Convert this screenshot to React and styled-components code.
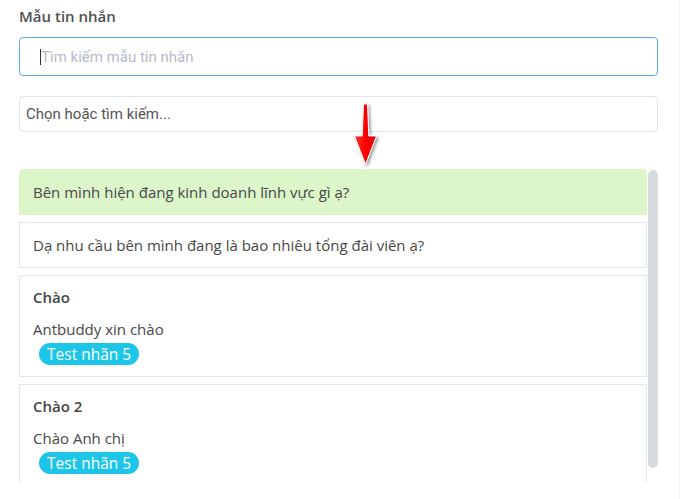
import React from "react";
import styled, { createGlobalStyle } from "styled-components";

const GlobalStyle = createGlobalStyle`
  html, body { margin: 0; padding: 0; background: #ffffff; }
  body { font-family: "Open Sans", "Noto Sans", sans-serif; }
  * { box-sizing: border-box; }
`;

const Panel = styled.div`
  position: relative;
  width: 680px;
  height: 499px;
  padding: 6px 21px 0 19px;
  border-right: 1px solid #f1f3f5;
  display: flex;
  flex-direction: column;
  overflow: hidden;
`;

const Title = styled.div`
  font-family: "Open Sans", sans-serif;
  font-size: 15px;
  font-weight: 600;
  line-height: 20px;
  color: #4f4f4f;
  margin-bottom: 11px;
`;

const SearchBox = styled.div`
  height: 39px;
  border: 1px solid #5fa9ec;
  border-radius: 4px;
  display: flex;
  align-items: center;
  padding-left: 20px;
  font-family: Roboto, sans-serif;
  font-size: 15px;
  color: #b6bac9;
`;

const Caret = styled.span`
  display: inline-block;
  width: 1px;
  height: 16px;
  background: #333;
`;

const SelectBox = styled.div`
  margin-top: 20px;
  height: 36px;
  border: 1px solid #dfe5e9;
  border-radius: 4px;
  display: flex;
  align-items: center;
  padding-left: 6px;
  font-family: Roboto, sans-serif;
  font-size: 15px;
  color: #555555;
`;

const ListArea = styled.div`
  margin-top: 37px;
  height: 313px;
  display: flex;
  gap: 1px;
  overflow: hidden;
`;

const Items = styled.div`
  width: 628px;
  display: flex;
  flex-direction: column;
  gap: 7px;
`;

const Item = styled.div`
  flex-shrink: 0;
  border: 1px solid ${(p) => (p.$active ? "#dcf6c9" : "#e2e7ea")};
  background: ${(p) => (p.$active ? "#dcf6c9" : "#ffffff")};
  border-radius: ${(p) => (p.$active ? "4px 4px 0 0" : "0")};
  padding: ${(p) => (p.$rich ? "11px 13px 11px 13px" : "0 13px")};
  min-height: 46px;
  display: flex;
  flex-direction: column;
  justify-content: ${(p) => (p.$rich ? "flex-start" : "center")};
  font-family: "Open Sans", sans-serif;
  font-size: 15px;
  color: #474747;
  line-height: 21px;
`;

const ItemTitle = styled.div`
  font-weight: 600;
  color: #444444;
`;

const ItemText = styled.div`
  margin-top: 11px;
`;

const Tag = styled.span`
  align-self: flex-start;
  margin: 3px 0 0 6px;
  height: 22px;
  padding: 0 8px;
  border-radius: 11px;
  background: #1dc6e9;
  color: #ffffff;
  font-size: 15.5px;
  line-height: 22px;
  white-space: nowrap;
`;

const Track = styled.div`
  width: 10px;
  padding-top: 1px;
`;

const Thumb = styled.div`
  height: 298px;
  border-radius: 5px;
  background: #d6dce0;
`;

const Arrow = styled.svg`
  position: absolute;
  left: 350px;
  top: 100px;
  overflow: visible;
`;

const RedArrow = () => (
  <Arrow width="32" height="70" viewBox="0 0 32 70">
    <defs>
      <linearGradient id="rg" x1="0" y1="0" x2="1" y2="0">
        <stop offset="0" stopColor="#ff3030" />
        <stop offset="0.5" stopColor="#ff0000" />
        <stop offset="1" stopColor="#d00000" />
      </linearGradient>
      <filter id="sh" x="-50%" y="-20%" width="200%" height="150%">
        <feDropShadow dx="1.5" dy="1.5" stdDeviation="1.5" floodColor="#000" floodOpacity="0.45" />
      </filter>
    </defs>
    <path
      d="M13.5 4 L17.5 4 L18.8 36 L26.5 36 L15.5 64.5 L4.5 36 L12.2 36 Z"
      fill="url(#rg)"
      stroke="#ffffff"
      strokeWidth="1"
      strokeLinejoin="round"
      filter="url(#sh)"
    />
  </Arrow>
);

const templates = [
  { text: "Bên mình hiện đang kinh doanh lĩnh vực gì ạ?", active: true },
  { text: "Dạ nhu cầu bên mình đang là bao nhiêu tổng đài viên ạ?" },
  { title: "Chào", text: "Antbuddy xin chào", tag: "Test nhãn 5" },
  { title: "Chào 2", text: "Chào Anh chị", tag: "Test nhãn 5" },
];

export default function App() {
  return (
    <>
      <GlobalStyle />
      <Panel>
        <Title>Mẫu tin nhắn</Title>
        <SearchBox>
          <Caret />
          Tìm kiếm mẫu tin nhắn
        </SearchBox>
        <SelectBox>Chọn hoặc tìm kiếm...</SelectBox>
        <ListArea>
          <Items>
            {templates.map((t, i) =>
              t.title ? (
                <Item key={i} $rich>
                  <ItemTitle>{t.title}</ItemTitle>
                  <ItemText>{t.text}</ItemText>
                  <Tag>{t.tag}</Tag>
                </Item>
              ) : (
                <Item key={i} $active={t.active}>
                  {t.text}
                </Item>
              )
            )}
          </Items>
          <Track>
            <Thumb />
          </Track>
        </ListArea>
        <RedArrow />
      </Panel>
    </>
  );
}
